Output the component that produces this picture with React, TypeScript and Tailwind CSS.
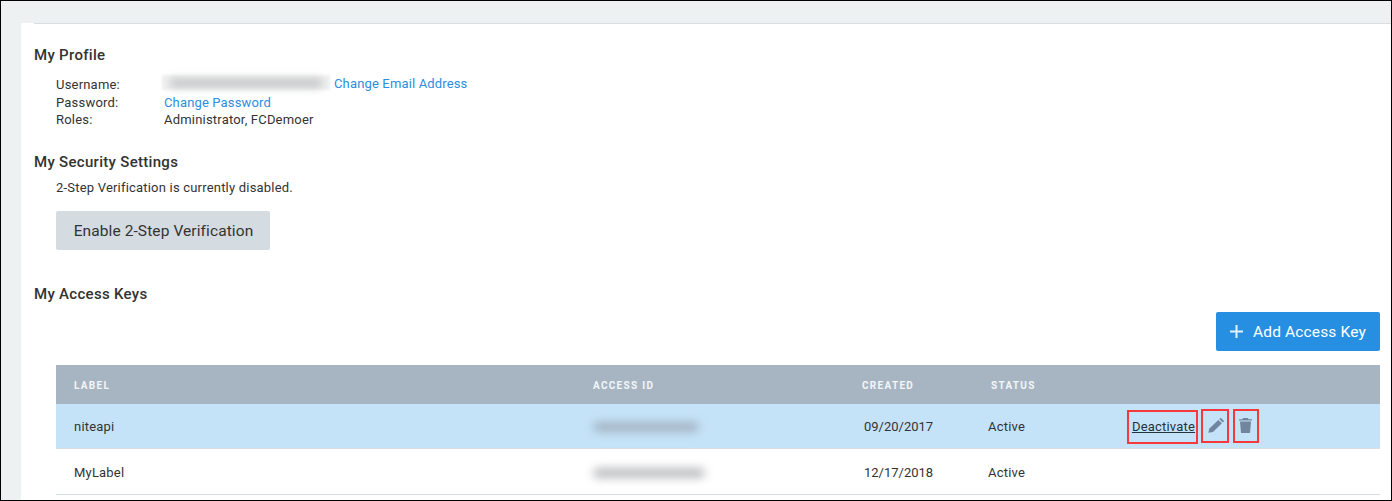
const rows = [
  { label: "niteapi", created: "09/20/2017", status: "Active", idStyle: "w-[106px] bg-[#a3b3c2]", active: true },
  { label: "MyLabel", created: "12/17/2018", status: "Active", idStyle: "w-[112px] bg-[#bcbdc0]", active: false },
];

function PencilIcon() {
  return (
    <svg viewBox="0 0 16 15" className="h-[15px] w-4 fill-[#71869e]">
      <path d="M0.3 14.7 1.4 10.6 10.3 1.9 13.9 5.3 5 14Z" />
      <path d="M11.2 1 12.2 0.2Q12.8 -0.1 13.3 0.3L15.7 2.7Q16.1 3.2 15.7 3.8L14.8 4.5Z" />
    </svg>
  );
}

function TrashIcon() {
  return (
    <svg viewBox="0 0 13 15" className="h-[15px] w-[13px] fill-[#71869e]">
      <path d="M4 0H9L9.5 1.2H13V2.4H0V1.2H3.5Z" />
      <path d="M1 3.6H12L11 15H2Z" />
    </svg>
  );
}

export default function App() {
  return (
    <div className="h-[501px] w-[1392px] overflow-hidden border border-black bg-[#edf1f2] pl-5 pt-[22px] font-['Roboto',sans-serif] text-[#333]">
      <div className="h-full bg-white pl-[13px]">
        <div className="h-px bg-[#d8dee2]" />

        <h2 className="mt-[21px] text-[15px] leading-5 font-medium tracking-[0.3px]">My Profile</h2>
        <div className="mt-[10px] pl-[22px] text-[13px] leading-[18px] tracking-[0.2px]">
          <div className="flex">
            <span className="w-[106px] pt-px">Username:</span>
            <div className="mr-[4px] flex h-[15px] w-[168px] items-center justify-center bg-[#f2f2f2] blur-[1px]">
              <div className="h-[8px] w-[92%] rounded-full bg-[#bdbfc1] blur-[4px]" />
            </div>
            <a className="tracking-[0.15px] text-[#2b8ee0]">Change Email Address</a>
          </div>
          <div className="flex">
            <span className="w-[108px]">Password:</span>
            <a className="tracking-[0.15px] text-[#2b8ee0]">Change Password</a>
          </div>
          <div className="-mt-px flex">
            <span className="w-[108px]">Roles:</span>
            <span>Administrator, FCDemoer</span>
          </div>
        </div>

        <h2 className="mt-[23px] text-[15px] leading-5 font-medium tracking-[0.3px]">My Security Settings</h2>
        <div className="mt-[7px] pl-[22px]">
          <p className="text-[13px] leading-[18px] tracking-[0.2px]">2-Step Verification is currently disabled.</p>
          <button className="mt-[14px] h-[39px] w-[214px] rounded-[2px] bg-[#d4dbe1] pt-[2px] pl-px text-center text-[15.5px] tracking-[0.1px]">
            Enable 2-Step Verification
          </button>
        </div>

        <h2 className="mt-[34px] text-[15px] leading-5 font-medium tracking-[0.3px]">My Access Keys</h2>

        <div className="mt-[8px] ml-[22px] mr-[11px]">
          <div className="flex justify-end">
            <button className="flex h-[39px] w-[164px] items-center rounded-[2px] bg-[#268fe1] pl-[14px] pt-[2px] text-[15.5px] tracking-[0.15px] text-white">
              <svg viewBox="0 0 13 13" className="-mt-[3px] mr-[10px] size-[13px] fill-[#e4f1fb]">
                <path d="M5.5 0H7.5V5.5H13V7.5H7.5V13H5.5V7.5H0V5.5H5.5Z" />
              </svg>
              Add Access Key
            </button>
          </div>

          <div className="mt-[14px] grid h-[39px] grid-cols-[519px_269px_129px_1fr] items-center bg-[#a7b5c3] pl-[18px] pt-[2px] text-[10px] font-bold tracking-[1.3px] text-[#f3f6f8]">
            <span>LABEL</span>
            <span>ACCESS ID</span>
            <span>CREATED</span>
            <span>STATUS</span>
          </div>

          {rows.map((row) => (
            <div
              key={row.label}
              className={`grid grid-cols-[519px_271px_124px_139px_1fr] items-center border-b border-[#d8dee2] pl-[18px] text-[13px] tracking-[0.2px] ${
                row.active ? "h-[45px] bg-[#c5e3f8]" : "h-[46px] bg-white"
              }`}
            >
              <span className="pt-[2px]">{row.label}</span>
              <div className={`mt-[2px] h-[10px] rounded-full blur-[5px] ${row.idStyle}`} />
              <span className="pt-[2px] tracking-normal">{row.created}</span>
              <span className="pt-[2px]">{row.status}</span>
              {row.active && (
                <div className="flex items-start">
                  <a className="mt-px flex h-[34px] w-[71px] items-center justify-center border-2 border-[#f5393c] pl-[2px] text-[#243240] underline">
                    Deactivate
                  </a>
                  <div className="ml-[3px] flex h-[34px] w-[28px] items-center justify-center border-2 border-[#f5393c] pl-[2px]">
                    <PencilIcon />
                  </div>
                  <div className="ml-[4px] flex h-[34px] w-[26px] items-center justify-center border-2 border-[#f5393c] pr-px">
                    <TrashIcon />
                  </div>
                </div>
              )}
            </div>
          ))}
        </div>
      </div>
    </div>
  );
}
